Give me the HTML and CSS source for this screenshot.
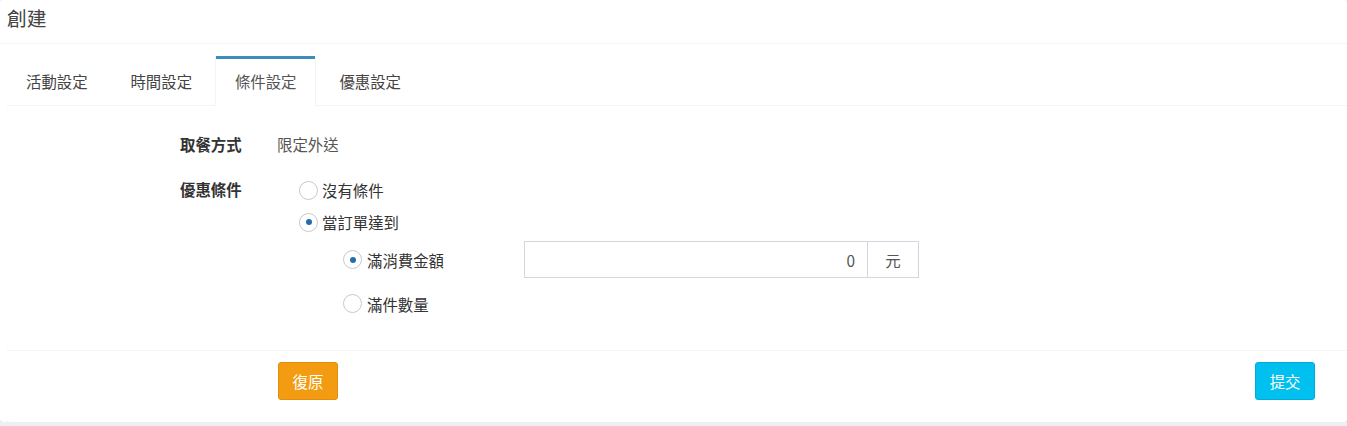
FILE: index.html
```html
<!DOCTYPE html>
<html lang="zh-Hant">
<head>
<meta charset="utf-8">
<title>創建</title>
<link rel="stylesheet" href="styles.css">
</head>
<body>
<div class="box">
  <div class="box-header"><h3 class="box-title">創建</h3></div>
  <div class="box-body">
    <div class="tabs-panel">
      <ul class="nav-tabs">
        <li class="tab">活動設定</li>
        <li class="tab">時間設定</li>
        <li class="tab active">條件設定</li>
        <li class="tab">優惠設定</li>
      </ul>
      <div class="tab-content">
        <div class="form-row">
          <div class="form-label">取餐方式</div>
          <div class="form-value">限定外送</div>
        </div>
        <div class="form-row form-row-options">
          <div class="form-label label-options">優惠條件</div>
          <div class="options">
            <div class="radio-item"><span class="radio"></span><span class="radio-text">沒有條件</span></div>
            <div class="radio-item"><span class="radio checked"></span><span class="radio-text">當訂單達到</span></div>
            <div class="sub-options">
              <div class="sub-item">
                <div class="radio-item sub-label"><span class="radio checked"></span><span class="radio-text">滿消費金額</span></div>
                <div class="input-group">
                  <div class="input-field">0</div>
                  <div class="input-addon">元</div>
                </div>
              </div>
              <div class="sub-item">
                <div class="radio-item sub-label"><span class="radio"></span><span class="radio-text">滿件數量</span></div>
              </div>
            </div>
          </div>
        </div>
      </div>
      <div class="panel-footer">
        <button class="btn btn-warning" type="button">復原</button>
        <button class="btn btn-info" type="button">提交</button>
      </div>
    </div>
  </div>
</div>
</body>
</html>
```

FILE: styles.css
```css
* { box-sizing: border-box; }

html, body {
  margin: 0;
  padding: 0;
}

body {
  background: #ecf0f5;
  font-family: "Noto Sans CJK TC", "Noto Sans", sans-serif;
  font-size: 15.4px;
  line-height: 22px;
  color: #333;
}

.box {
  background: #fff;
  border-radius: 3px;
  box-shadow: 0 1px 1px rgba(0, 0, 0, 0.1);
}

.box-header {
  height: 44px;
  padding: 7px 7px 0;
  border-bottom: 1px solid #f4f4f4;
}

.box-title {
  margin: 0;
  font-size: 19.8px;
  line-height: 22px;
  font-weight: normal;
  color: #444;
}

.box-body {
  padding: 12px 0 0 7px;
}

.tabs-panel {
  background: #fff;
  border-radius: 3px;
  box-shadow: 0 1px 1px rgba(0, 0, 0, 0.1);
}

.nav-tabs {
  display: flex;
  margin: 0;
  padding: 0;
  list-style: none;
  border-bottom: 1px solid #f4f4f4;
}

.tab {
  height: 49px;
  padding: 11px 18.4px 13px 19px;
  margin-right: 5.5px;
  margin-bottom: -1px;
  border-top: 3px solid transparent;
  color: #444;
  white-space: nowrap;
}

.tab:first-child {
  border-top-left-radius: 3px;
}

.tab.active {
  border-top-color: #3c8dbc;
  background: #fff;
  color: #555;
  height: 50px;
  box-shadow: 1px 0 0 #f4f4f4, -1px 0 0 #f4f4f4;
}

.tab-content {
  padding: 27px 0 28px 173px;
}

.form-row {
  display: flex;
  align-items: flex-start;
}

.form-row-options {
  margin-top: 19px;
}

.form-label {
  width: 97px;
  flex: none;
  font-weight: bold;
  color: #333;
}

.label-options {
  margin-top: 4px;
}

.form-value {
  color: #555;
}

.options {
  margin-left: 22px;
}

.radio-item {
  display: flex;
  align-items: center;
  height: 32px;
  color: #333;
}

.radio {
  width: 19px;
  height: 19px;
  flex: none;
  border-radius: 50%;
  border: 1px solid #c9c9c9;
  background: #fff;
  margin-right: 4px;
  display: flex;
  align-items: center;
  justify-content: center;
}

.radio.checked::after {
  content: "";
  width: 6px;
  height: 6px;
  border-radius: 50%;
  background: #1f6fae;
}

.sub-options {
  margin-left: 44px;
  margin-top: 3px;
  display: flex;
  flex-direction: column;
  gap: 7px;
}

.sub-item {
  display: flex;
  align-items: center;
  height: 37px;
}

.sub-label {
  width: 181px;
  height: 37px;
}

.sub-label .radio-text {
  margin-left: 1px;
}

.input-group {
  display: flex;
  height: 37px;
  width: 395px;
  border: 1px solid #d2d6de;
}

.input-field {
  flex: 1;
  text-align: right;
  padding: 7px 12px 0 0;
  color: #555;
  border-right: 1px solid #d2d6de;
}

.input-addon {
  width: 50px;
  text-align: center;
  padding-top: 7px;
  color: #555;
}

.panel-footer {
  display: flex;
  justify-content: space-between;
  border-top: 1px solid #f4f4f4;
  padding: 11px 32px 22px 271px;
}

.btn {
  height: 38px;
  padding: 0 13.5px;
  border-radius: 3px;
  border: 1px solid transparent;
  font-family: inherit;
  font-size: 15.4px;
  line-height: 36px;
  color: #fff;
  cursor: pointer;
}

.btn-warning {
  background: #f39c12;
  border-color: #e08e0b;
}

.btn-info {
  background: #00c0ef;
  border-color: #00acd6;
}
```
